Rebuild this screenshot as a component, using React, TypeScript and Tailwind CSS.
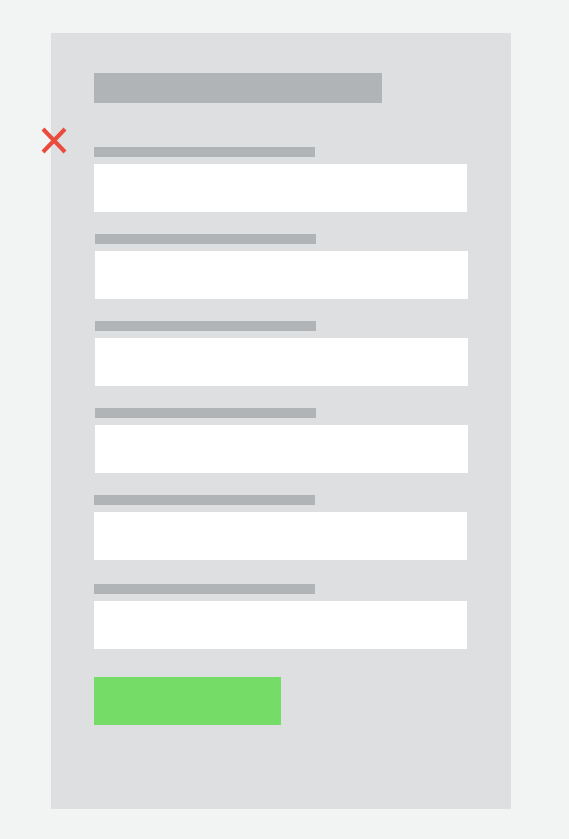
import React from "react";

type Field = { offset: boolean; gapAfter: string };

const fields: Field[] = [
  { offset: false, gapAfter: "mb-[22px]" },
  { offset: true, gapAfter: "mb-[22px]" },
  { offset: true, gapAfter: "mb-[22px]" },
  { offset: true, gapAfter: "mb-[22px]" },
  { offset: false, gapAfter: "mb-[24px]" },
  { offset: false, gapAfter: "mb-[28px]" },
];

function FieldRow({ field }: { field: Field }) {
  return (
    <div className={`flex flex-col gap-[7px] ${field.offset ? "ml-px" : ""} ${field.gapAfter}`}>
      <div className="h-[10px] w-[221px] bg-[#b0b4b6]" />
      <div className="h-[48px] w-[373px] bg-white" />
    </div>
  );
}

export default function App() {
  return (
    <div className="relative min-h-[839px] w-full bg-[#f2f3f3] pl-[51px] pt-[33px]">
      <div className="flex h-[776px] w-[460px] flex-col bg-[#dddfe0] pl-[43px] pt-[40px]">
        <div className="mb-[44px] h-[30px] w-[288px] bg-[#b0b4b6]" />
        {fields.map((f, i) => (
          <FieldRow key={i} field={f} />
        ))}
        <div className="h-[48px] w-[187px] bg-[#74dc67]" />
      </div>

      {/* close marker sitting on the panel edge */}
      <svg
        className="absolute left-[40px] top-[127px]"
        width="28"
        height="27"
        viewBox="0 0 28 27"
      >
        <path
          d="M3 2 L25 25 M25 2 L3 25"
          stroke="#ea4b3e"
          strokeWidth="4"
          strokeLinecap="butt"
        />
      </svg>
    </div>
  );
}
